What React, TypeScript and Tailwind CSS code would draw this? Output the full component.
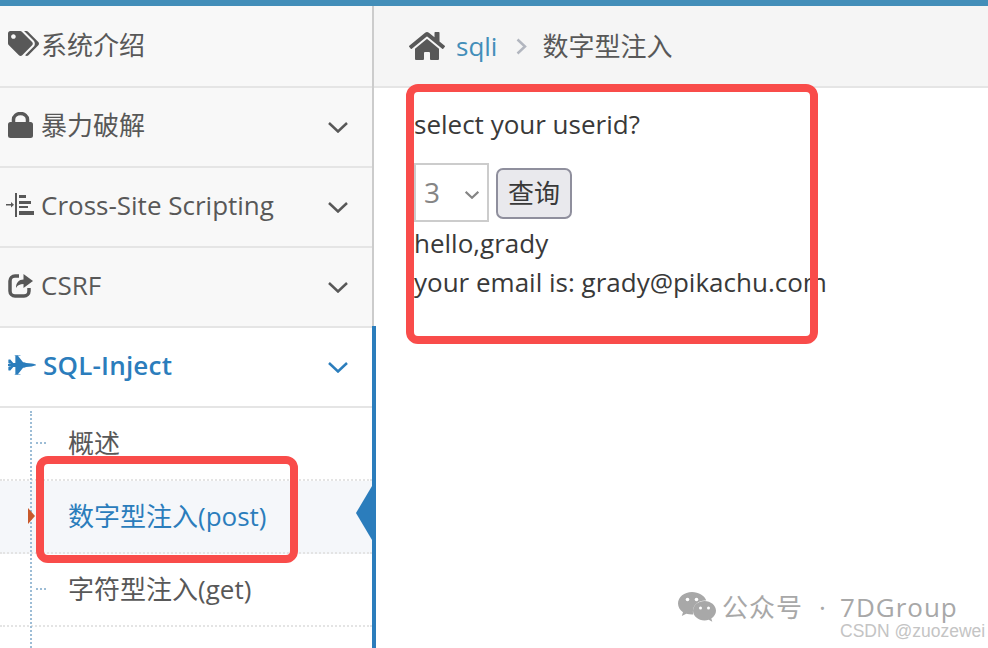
import React from 'react';
import { FaTags, FaHome, FaFighterJet } from 'react-icons/fa';

const FONT = "font-['Open_Sans','Noto_Sans_CJK_SC',sans-serif]";

function IndentIcon() {
  return (
    <svg width="28" height="24" viewBox="0 0 28 24" fill="#585858" className="ml-[-2px]">
      <rect x="0" y="11" width="5" height="1.500" />
      <path d="M5 9l3 2.750-3 2.750z" />
      <rect x="9" y="0" width="2" height="24" />
      <rect x="13" y="2" width="7" height="3" />
      <rect x="13" y="8" width="12" height="3" />
      <rect x="13" y="13" width="9" height="2" />
      <rect x="13" y="18" width="15" height="4" />
    </svg>
  );
}

function LockIcon() {
  return (
    <svg width="25" height="26" viewBox="0 0 25 26" fill="#585858">
      <rect x="0" y="10" width="25" height="16" rx="2.500" />
      <path d="M5.500 11V7.500a7 6 0 0 1 14 0V11" fill="none" stroke="#585858" strokeWidth="3.500" />
    </svg>
  );
}

function ShareIcon() {
  return (
    <svg width="25" height="25" viewBox="0 0 25 25">
      <path d="M11 3H7a5 5 0 0 0-5 5v10a5 5 0 0 0 5 5h9a5 5 0 0 0 5-5v-3" fill="none" stroke="#585858" strokeWidth="3.500" />
      <path d="M15.500 1L25 8l-9.500 7v-4c-3.500 0-6 1-7.500 4 0-5.500 3-8.500 7.500-8.500z" fill="#585858" />
    </svg>
  );
}

function Chevron({ w = 20, h = 11, sw = 2.500 }: { w?: number; h?: number; sw?: number }) {
  return (
    <svg width={w} height={h} viewBox="0 0 20 11" fill="none" stroke="currentColor" strokeWidth={sw} className="relative top-[2px] shrink-0">
      <path d="M1 1l9 8.500L19 1" />
    </svg>
  );
}

function WechatIcon() {
  return (
    <svg width="38" height="30" viewBox="0 0 38 30" fill="#a8a8a8">
      <path d="M14 0C6.300 0 0 5 0 11.500c0 3.600 2 6.600 5 8.700L3.800 24l4.500-2.300c1.800.5 3.700.8 5.700.8.400 0 .9 0 1.300-.1-.3-1-.4-2-.4-3 0-6 5.500-10.800 12.400-10.800h1C26.500 3.500 20.800 0 14 0z" />
      <path d="M38 18.700c0-5.400-5.300-9.700-11.500-9.700S15 13.300 15 18.700s5.300 9.700 11.500 9.700c1.500 0 2.900-.2 4.200-.7l3.600 2-1-3.300c2.800-1.900 4.700-4.600 4.700-7.700z" />
      <circle cx="9.500" cy="7.500" r="1.800" fill="#fff" />
      <circle cx="18.500" cy="7.500" r="1.800" fill="#fff" />
      <circle cx="22.500" cy="16" r="1.500" fill="#fff" />
      <circle cx="30.500" cy="16" r="1.500" fill="#fff" />
    </svg>
  );
}

function NavRow({ icon, label, chevron = true, active = false, first = false }: { icon: React.ReactNode; label: string; chevron?: boolean; active?: boolean; first?: boolean }) {
  return (
    <div className={`flex items-center border-b-2 border-[#e5e5e5] pr-[24px] pl-[8px] ${first ? 'h-[82px] pb-[2px]' : 'h-[80px] pb-[4px]'} ${active ? 'bg-white font-semibold text-[#2b7dbc]' : 'bg-[#f8f8f8] text-[#585858]'}`}>
      <span className={`flex shrink-0 items-center ${active ? 'w-[35px]' : 'w-[33px]'}`}>{icon}</span>
      <span className={`flex-1 text-[26px] leading-none ${active ? 'tracking-[0.2px]' : ''}`}>{label}</span>
      {chevron && <Chevron />}
    </div>
  );
}

function SubRow({ label, active = false }: { label: string; active?: boolean }) {
  return (
    <div className={`relative flex h-[73px] items-center border-b-2 border-dotted border-[#e4e4e4] pl-[68px] text-[26px] ${active ? 'bg-[#f5f7fa] text-[#2b7dbc]' : 'text-[#585858]'}`}>
      {!active && <span className="absolute top-[34px] left-[36px] w-[10px] border-t-2 border-dotted border-[#9dbdd6]" />}
      {active && <span className="absolute top-[27px] left-[28px] z-10 h-0 w-0 border-y-[8px] border-l-[7px] border-y-transparent border-l-[#c8592c]" />}
      {label}
    </div>
  );
}

export default function App() {
  return (
    <div className={`relative h-[648px] w-[988px] overflow-hidden bg-white ${FONT}`}>
      <div className="h-[6px] bg-[#438eb9]" />
      <div className="flex h-[642px]">
        {/* sidebar */}
        <div className="relative w-[374px] shrink-0 border-r-2 border-[#cccccc] bg-[#f8f8f8]">
          <NavRow first icon={<FaTags size={31} color="#585858" className="relative top-[-2px]" />} label="系统介绍" chevron={false} />
          <NavRow icon={<LockIcon />} label="暴力破解" />
          <NavRow icon={<IndentIcon />} label="Cross-Site Scripting" />
          <NavRow icon={<ShareIcon />} label="CSRF" />
          <NavRow icon={<FaFighterJet size={28} color="#2b7dbc" />} label="SQL-Inject" active />
          <div className="relative h-[240px] bg-white">
            <SubRow label="概述" />
            <SubRow label="数字型注入(post)" active />
            <SubRow label="字符型注入(get)" />
            <span className="absolute top-[3px] bottom-0 left-[30px] border-l-2 border-dotted border-[#9dbdd6]" />
          </div>
          {/* active marker */}
          <span className="absolute top-[320px] right-[-4px] bottom-0 w-[4px] bg-[#2b7dbc]" />
          <span className="absolute top-[480px] right-0 h-0 w-0 border-y-[27px] border-r-[16px] border-y-transparent border-r-[#2b7dbc]" />
        </div>

        {/* main */}
        <div className="flex-1">
          <div className="flex h-[82px] items-center border-b-2 border-[#e5e5e5] bg-[#f5f5f5] pl-[35px] text-[26px]">
            <FaHome size={36} color="#585858" />
            <span className="ml-[11px] text-[#438eb9]">sqli</span>
            <svg width="11" height="17" viewBox="0 0 11 17" className="mr-[15px] ml-[19px]" fill="none" stroke="#b2b6bf" strokeWidth="2.500">
              <path d="M1.500 1.500L9 8.500l-7.500 7" />
            </svg>
            <span className="text-[#585858]">数字型注入</span>
          </div>
          <div className="pt-[17px] pl-[40px] text-[26px] leading-[39px] whitespace-nowrap text-[#393939]">
            <p>select your userid?</p>
            <div className="mt-[19px] flex items-center gap-[7px]">
              <div className="flex h-[59px] w-[75px] items-center justify-between border-2 border-[#cccccc] bg-white pr-[8px] pl-[8px] text-[28px] text-[#858585]">
                <span>3</span>
                <Chevron w={14} h={8} sw={3} />
              </div>
              <button className="mt-[2px] h-[51px] w-[76px] rounded-[7px] border-2 border-[#8f8f9d] bg-[#e9e9ed] text-[26px] text-[#393939]">查询</button>
            </div>
            <p className="mt-[2px]">hello,grady</p>
            <p>your email is: grady@pikachu.com</p>
          </div>
        </div>
      </div>

      {/* red annotation boxes over the page */}
      <div className="absolute top-[456px] left-[36px] h-[107px] w-[262px] rounded-[12px] border-[8px] border-[#f94c4a]" />
      <div className="absolute top-[84px] left-[406px] h-[260px] w-[412px] rounded-[12px] border-[8px] border-[#f94c4a]" />

      {/* watermark */}
      <div className="absolute top-[592px] left-[678px] flex h-[30px] items-center text-[26px] leading-[24px] tracking-[1px] text-[#a8a8a8]">
        <WechatIcon />
        <span className="ml-[6px]">公众号</span>
        <span className="ml-[16px] w-[21px]">·</span>
        <span>7DGroup</span>
      </div>
      <div className="absolute top-[622px] left-[840px] font-['Liberation_Sans',sans-serif] text-[17.5px] leading-[18px] text-[#c4c4c4]">CSDN @zuozewei</div>
    </div>
  );
}
